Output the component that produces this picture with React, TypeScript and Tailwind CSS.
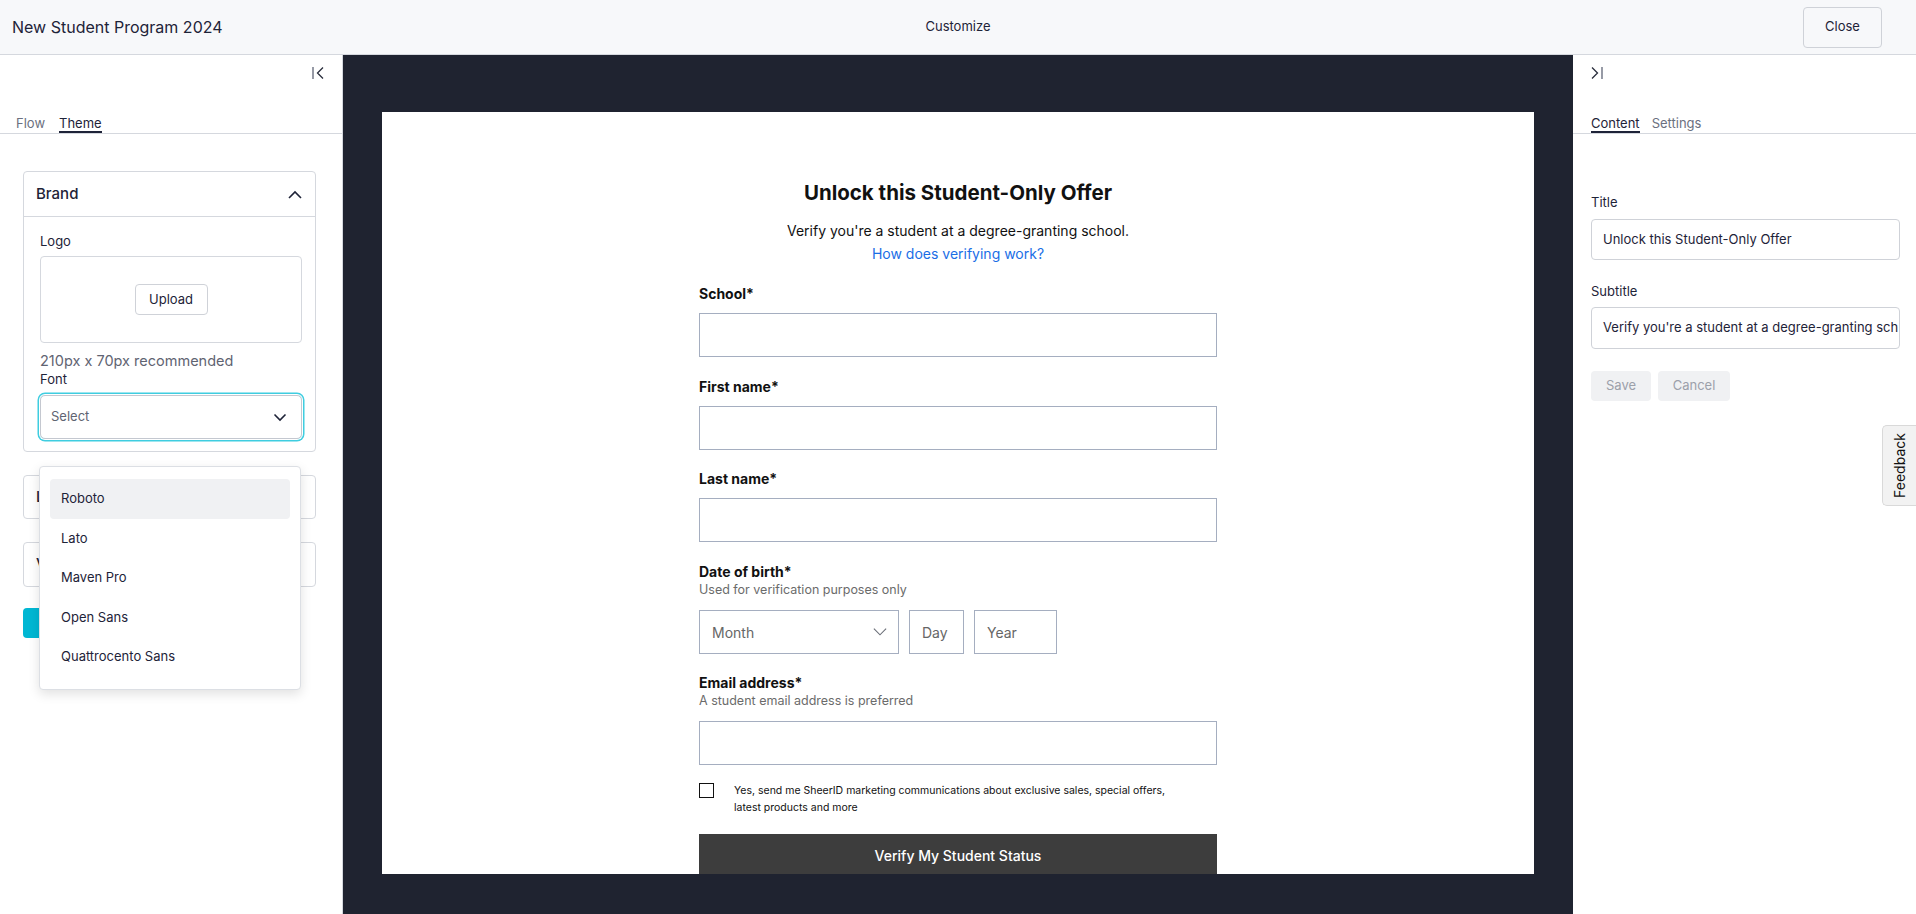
import { useState } from "react";

const NAVY = "text-[#1e2338]";

const CollapseLeft = () => (
  <svg width="14" height="14" viewBox="0 0 14 14" fill="none">
    <path d="M2 1v12" stroke="#6b7080" strokeWidth="1.4" />
    <path d="M12 1.5L6.5 7 12 12.5" stroke="#2a2e3d" strokeWidth="1.3" />
  </svg>
);

const CollapseRight = () => (
  <svg width="14" height="14" viewBox="0 0 14 14" fill="none">
    <path d="M2 1.5L7.5 7 2 12.5" stroke="#2a2e3d" strokeWidth="1.3" />
    <path d="M12 1v12" stroke="#6b7080" strokeWidth="1.4" />
  </svg>
);

const Chevron = ({ up = false, thin = false }: { up?: boolean; thin?: boolean }) => (
  <svg width={thin ? 16 : 14} height={thin ? 10 : 9} viewBox="0 0 14 9" fill="none">
    <path
      d={up ? "M1 8l6-6 6 6" : "M1.5 1.5L7 7l5.5-5.5"}
      stroke={thin ? "#6b6f78" : "#1e2338"}
      strokeWidth={thin ? 1 : 1.6}
    />
  </svg>
);

const Tab = ({ label, active }: { label: string; active?: boolean }) => (
  <span
    className={`border-b-2 text-[13px] leading-4 ${
      active ? "border-[#1e2338] text-[#1e2338]" : "border-transparent text-[#6b7080]"
    }`}
  >
    {label}
  </span>
);

const Field = ({ label, top }: { label: string; top: string }) => (
  <div className={top}>
    <div className="text-[14px] font-bold leading-5 text-[#111]">{label}</div>
    <div className="mt-[9px] h-[44px] border border-[#a5aec0]" />
  </div>
);

export default function App() {
  const [font] = useState("Select");
  const fonts = ["Roboto", "Lato", "Maven Pro", "Open Sans", "Quattrocento Sans"];

  return (
    <div className="relative flex h-[914px] w-[1916px] flex-col overflow-hidden bg-white font-['Inter',sans-serif]">
      {/* Header */}
      <header className="flex h-[55px] shrink-0 items-center border-b border-[#d5d8de] bg-[#f7f8fa] pl-[12px] pr-[34px]">
        <div className={`w-[422px] text-[16px] ${NAVY}`}>New Student Program 2024</div>
        <div className={`flex-1 text-center text-[13px] ${NAVY}`}>Customize</div>
        <div className="flex w-[400px] justify-end">
          <button className={`h-[41px] w-[79px] rounded-[4px] border border-[#cfd2d8] bg-[#f7f8fa] text-[13px] ${NAVY}`}>
            Close
          </button>
        </div>
      </header>

      <div className="flex min-h-0 flex-1">
        {/* Left panel */}
        <aside className="relative w-[343px] shrink-0 border-r border-[#d5d8de] bg-white">
          <div className="flex h-[36px] items-center justify-end pr-[17px]">
            <CollapseLeft />
          </div>
          <div className="flex gap-[14px] border-b border-[#d5d8de] pl-4 pt-[24px]">
            <Tab label="Flow" />
            <Tab label="Theme" active />
          </div>

          <div className="ml-[23px] w-[293px]">
            {/* Brand card */}
            <div className="mt-[37px] rounded-[4px] border border-[#d5d8de]">
              <div className="flex h-[45px] items-center justify-between border-b border-[#d5d8de] pl-[12px] pr-[13px]">
                <span className={`text-[15px] font-medium ${NAVY}`}>Brand</span>
                <Chevron up />
              </div>
              <div className="pb-[12px] pl-4 pr-[13px] pt-[16px]">
                <div className={`text-[13px] leading-4 ${NAVY}`}>Logo</div>
                <div className="mt-[7px] flex h-[87px] items-center justify-center rounded-[4px] border border-[#d5d8de]">
                  <button className={`h-[31px] w-[73px] rounded-[4px] border border-[#cfd2d8] text-[13px] ${NAVY}`}>
                    Upload
                  </button>
                </div>
                <div className="mt-[8px] text-[14.5px] leading-5 text-[#5f6472]">210px x 70px recommended</div>
                <div className={`text-[13px] leading-4 ${NAVY}`}>Font</div>
                <div className="mt-[8px] flex h-[44px] items-center justify-between rounded-[5px] border border-[#c4c8d0] pl-[10px] pr-[14px] shadow-[0_0_0_1px_#ffffff,0_0_0_2.5px_#3fcde0]">
                  <span className="text-[13px] text-[#5f6472]">{font}</span>
                  <Chevron />
                </div>
              </div>
            </div>

            <div className="mt-[23px] flex h-[44px] items-center rounded-[4px] border border-[#d5d8de] pl-[12px]">
              <span className={`text-[15px] font-medium ${NAVY}`}>Layout</span>
            </div>
            <div className="mt-[23px] flex h-[45px] items-center rounded-[4px] border border-[#d5d8de] pl-[12px]">
              <span className={`text-[15px] font-medium ${NAVY}`}>Verification</span>
            </div>
            <button className="mt-[21px] h-[30px] w-[120px] rounded-[4px] bg-[#00b7d3] text-[13px] text-white">
              Publish
            </button>
          </div>

          {/* Font dropdown menu */}
          <div className="absolute left-[39px] top-[411px] w-[262px] rounded-[4px] border border-[#dcdfe4] bg-white px-[10px] py-[12px] shadow-[0_4px_12px_rgba(0,0,0,0.12)]">
            {fonts.map((f, i) => (
              <div
                key={f}
                className={`flex h-[39.5px] items-center rounded-[4px] pl-[11px] text-[13px] ${NAVY} ${
                  i === 0 ? "bg-[#f0f1f3]" : ""
                }`}
              >
                {f}
              </div>
            ))}
          </div>
        </aside>

        {/* Preview canvas */}
        <main className="flex min-w-0 flex-1 bg-[#1f2330] px-[39px] pb-[40px] pt-[57px]">
          <div className="flex-1 overflow-hidden bg-white">
            <div className="mx-auto w-[518px] pt-[67px]">
              <h1 className="text-center text-[20.5px] font-bold leading-7 text-[#111]">
                Unlock this Student-Only Offer
              </h1>
              <p className="mt-[14px] text-center text-[14px] leading-[20px] text-[#111]">
                Verify you're a student at a degree-granting school.
              </p>
              <p className="mt-[1px] text-center text-[14px] leading-[24px] text-[#1a6ee6]">How does verifying work?</p>

              <Field label="School*" top="mt-[18px]" />
              <Field label="First name*" top="mt-[20px]" />
              <Field label="Last name*" top="mt-[19px]" />

              <div className="mt-[20px]">
                <div className="text-[14px] font-bold leading-5 text-[#111]">Date of birth*</div>
                <div className="text-[12.5px] leading-4 text-[#6b6b6b]">Used for verification purposes only</div>
                <div className="mt-[12px] flex gap-[10px]">
                  <div className="flex h-[44px] w-[200px] items-center justify-between border border-[#a5aec0] pl-[12px] pr-[10px]">
                    <span className="text-[14px] text-[#666]">Month</span>
                    <Chevron thin />
                  </div>
                  <div className="flex h-[44px] w-[55px] items-center border border-[#a5aec0] pl-[12px] text-[14px] text-[#666]">
                    Day
                  </div>
                  <div className="flex h-[44px] w-[83px] items-center border border-[#a5aec0] pl-[12px] text-[14px] text-[#666]">
                    Year
                  </div>
                </div>
              </div>

              <div className="mt-[19px]">
                <div className="text-[14px] font-bold leading-5 text-[#111]">Email address*</div>
                <div className="text-[12.5px] leading-4 text-[#6b6b6b]">A student email address is preferred</div>
                <div className="mt-[12px] h-[44px] border border-[#a5aec0]" />
              </div>

              <div className="mt-[18px] flex">
                <div className="h-[15px] w-[15px] shrink-0 border border-[#111]" />
                <p className="ml-[20px] mt-[-1px] text-[10.5px] leading-[17px] text-[#111]">
                  Yes, send me SheerID marketing communications about exclusive sales, special offers,
                  <br />
                  latest products and more
                </p>
              </div>

              <button className="mt-[18px] flex h-[42px] w-full items-center justify-center bg-[#3d3d3d] text-[14px] font-medium text-white">
                Verify My Student Status
              </button>
            </div>
          </div>
        </main>

        {/* Right panel */}
        <aside className="w-[343px] shrink-0 bg-white">
          <div className="flex h-[36px] items-center pl-[17px]">
            <CollapseRight />
          </div>
          <div className="flex gap-[12px] border-b border-[#d5d8de] pl-[18px] pt-[24px]">
            <Tab label="Content" active />
            <Tab label="Settings" />
          </div>
          <div className="pl-[18px] pr-[16px]">
            <div className={`mt-[60px] text-[13px] leading-4 ${NAVY}`}>Title</div>
            <div className={`mt-[9px] flex h-[41px] items-center rounded-[4px] border border-[#cfd2d8] pl-[11px] text-[13px] ${NAVY}`}>
              Unlock this Student-Only Offer
            </div>
            <div className={`mt-[23px] text-[13px] leading-4 ${NAVY}`}>Subtitle</div>
            <div className={`mt-[8px] flex h-[42px] items-center overflow-hidden whitespace-nowrap rounded-[4px] border border-[#cfd2d8] pl-[11px] pr-[10px] text-[13px] ${NAVY}`}>
              Verify you're a student at a degree-granting sch
            </div>
            <div className="mt-[22px] flex gap-[7px]">
              <button className="h-[30px] w-[60px] rounded-[4px] bg-[#f0f1f3] text-[13px] text-[#9ca0aa]">Save</button>
              <button className="h-[30px] w-[72px] rounded-[4px] bg-[#f0f1f3] text-[13px] text-[#9ca0aa]">Cancel</button>
            </div>
          </div>
        </aside>
      </div>

      {/* Feedback tab */}
      <div className="absolute right-0 top-[425px] flex h-[81px] w-[34px] items-center justify-center rounded-l-[5px] border border-r-0 border-[#d9d9d9] bg-[#f2f2f2]">
        <span className="-rotate-90 whitespace-nowrap text-[14px] text-[#111]">Feedback</span>
      </div>
    </div>
  );
}
